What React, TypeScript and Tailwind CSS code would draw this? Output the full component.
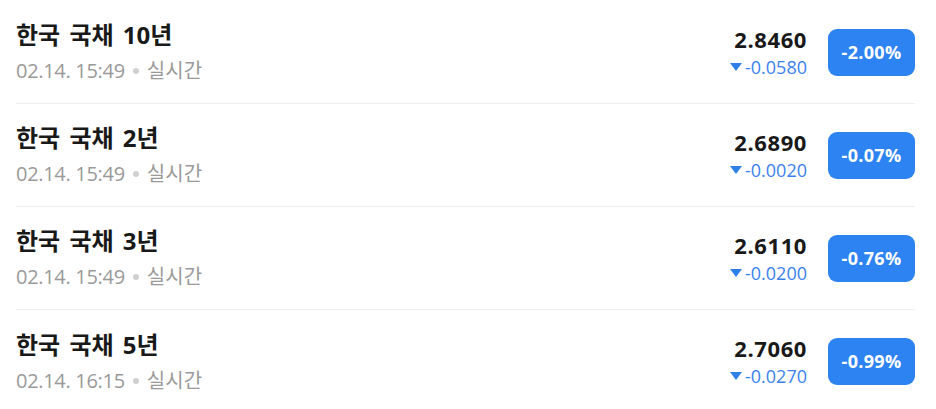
import React from "react";

const rows = [
  { name: "한국 국채 10년", time: "02.14. 15:49", price: "2.8460", change: "-0.0580", pct: "-2.00%" },
  { name: "한국 국채 2년", time: "02.14. 15:49", price: "2.6890", change: "-0.0020", pct: "-0.07%" },
  { name: "한국 국채 3년", time: "02.14. 15:49", price: "2.6110", change: "-0.0200", pct: "-0.76%" },
  { name: "한국 국채 5년", time: "02.14. 16:15", price: "2.7060", change: "-0.0270", pct: "-0.99%" },
];

export default function App() {
  return (
    <div
      className="w-[936px] h-[409px] bg-white pt-[1px] pl-4 pr-[21px] overflow-hidden"
      style={{ fontFamily: '"Open Sans", "Noto Sans CJK KR", sans-serif' }}
    >
      {rows.map((r, i) => (
        <div
          key={i}
          className={`flex items-center h-[103px] ${i < rows.length - 1 ? "border-b border-[#eeeeee]" : ""}`}
        >
          <div className="flex-1 flex flex-col">
            <div className="text-[24px] leading-[30px] font-bold text-[#191919] [word-spacing:3px]">{r.name}</div>
            <div className="mt-[8px] flex items-center text-[20px] leading-[26px] text-[#9a9a9a]">
              <span className="tracking-[-0.3px]">{r.time}</span>
              <span className="mx-[8px] w-[6px] h-[6px] rounded-full bg-[#d0d0d0]" />
              <span>실시간</span>
            </div>
          </div>
          <div className="flex flex-col items-end mr-[21px]">
            <div className="text-[22px] leading-[24px] font-bold text-[#191919] tracking-[0.6px]">{r.price}</div>
            <div className="mt-[5px] flex items-center text-[18px] leading-[22px] text-[#3c82ee]">
              <svg width="12" height="8" viewBox="0 0 12 8" className="mr-[3px]">
                <path d="M0 0 H12 L6 8 Z" fill="#2f7fe8" />
              </svg>
              <span>{r.change}</span>
            </div>
          </div>
          <div className="w-[87px] h-[47px] rounded-[9px] bg-[#2e83f2] flex items-center justify-center text-white text-[18px] font-bold tracking-[0.3px]">
            {r.pct}
          </div>
        </div>
      ))}
    </div>
  );
}
